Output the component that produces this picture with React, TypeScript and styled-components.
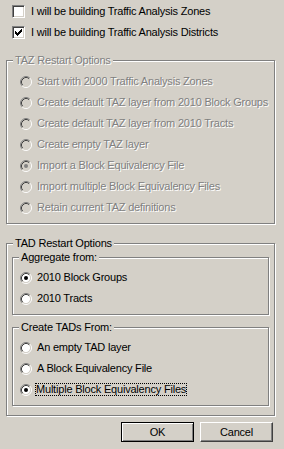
import React from 'react';
import styled, { createGlobalStyle } from 'styled-components';

const Global = createGlobalStyle`
  html, body { margin: 0; padding: 0; background: #d4d0c8; }
  body { font-family: "Liberation Sans", Arial, sans-serif; font-size: 11px; letter-spacing: -0.2px; }
`;

const Dialog = styled.div`
  width: 284px;
  height: 449px;
  box-sizing: border-box;
  background: #d4d0c8;
  padding-top: 1px;
  display: flex;
  flex-direction: column;
  color: #000;
`;

const CheckList = styled.div`
  display: flex;
  flex-direction: column;
  padding-left: 12px;
`;

const Row = styled.div<{ $gap: number }>`
  display: flex;
  align-items: center;
  height: 21px;
  gap: ${(p) => p.$gap}px;
  white-space: nowrap;
`;

const Text = styled.span<{ $disabled?: boolean; $focus?: boolean }>`
  line-height: 13px;
  color: ${(p) => (p.$disabled ? '#808080' : '#000')};
  text-shadow: ${(p) => (p.$disabled ? '1px 1px 0 #fff' : 'none')};
  ${(p) =>
    p.$focus
      ? `outline: 1px dotted #000; outline-offset: -1px; padding: 0 1px; margin-left: -2px;`
      : ''}
`;

const CheckBox = styled.span`
  width: 13px;
  height: 13px;
  box-sizing: border-box;
  border-style: solid;
  border-width: 1px;
  border-color: #808080 #fff #fff #808080;
  box-shadow: inset 1px 1px 0 #404040, inset -1px -1px 0 #d4d0c8;
  background: #fff;
  display: flex;
  align-items: center;
  justify-content: center;
  flex: none;
`;

const Group = styled.div<{ $mt: number; $mx: [number, number]; $pt: number; $pb: number; $pl: number; $pr?: number }>`
  position: relative;
  margin: ${(p) => p.$mt}px ${(p) => p.$mx[1]}px 0 ${(p) => p.$mx[0]}px;
  padding: ${(p) => p.$pt}px ${(p) => p.$pr ?? 0}px ${(p) => p.$pb}px ${(p) => p.$pl}px;
  border: 1px solid #808080;
  box-shadow: inset 1px 1px 0 #fff, 1px 1px 0 #fff;
  display: flex;
  flex-direction: column;
`;

const Legend = styled.span<{ $disabled?: boolean }>`
  position: absolute;
  left: 6px;
  top: -7px;
  padding: 0 2px;
  line-height: 13px;
  background: #d4d0c8;
  white-space: nowrap;
  color: ${(p) => (p.$disabled ? '#808080' : '#000')};
  text-shadow: ${(p) => (p.$disabled ? '1px 1px 0 #fff' : 'none')};
`;

const ButtonBar = styled.div`
  display: flex;
  justify-content: flex-end;
  gap: 6px;
  padding-right: 11px;
  margin-top: 6px;
`;

const Button = styled.button<{ $default?: boolean }>`
  width: 73px;
  height: 20px;
  box-sizing: border-box;
  padding: 0;
  font-family: "Liberation Sans", Arial, sans-serif;
  font-size: 11px;
  letter-spacing: -0.2px;
  color: #000;
  background: #d4d0c8;
  ${(p) =>
    p.$default
      ? `border: 1px solid #000; box-shadow: inset 1px 1px 0 #fff, inset -1px -1px 0 #808080;`
      : `border-style: solid; border-width: 1px; border-color: #fff #404040 #404040 #fff; box-shadow: inset -1px -1px 0 #808080;`}
`;

const CheckMark = () => {
  const px: [number, number][] = [
    [6, 0],
    [5, 1], [6, 1],
    [0, 2], [4, 2], [5, 2], [6, 2],
    [0, 3], [1, 3], [3, 3], [4, 3], [5, 3],
    [0, 4], [1, 4], [2, 4], [3, 4], [4, 4],
    [1, 5], [2, 5], [3, 5],
    [2, 6],
  ];
  return (
    <svg width="7" height="7" viewBox="0 0 7 7" shapeRendering="crispEdges">
      {px.map(([x, y]) => (
        <rect key={`${x}-${y}`} x={x} y={y} width="1" height="1" fill="#000" />
      ))}
    </svg>
  );
};

const Checkbox = ({ checked, label }: { checked?: boolean; label: string }) => (
  <Row $gap={6}>
    <CheckBox>{checked && <CheckMark />}</CheckBox>
    <Text>{label}</Text>
  </Row>
);

const RadioIcon = ({ checked, disabled }: { checked?: boolean; disabled?: boolean }) => (
  <svg width="12" height="12" viewBox="0 0 12 12" style={{ flex: 'none' }}>
    <circle cx="6" cy="6" r="4.2" fill={disabled ? '#d4d0c8' : '#fff'} />
    <path d="M2.11 9.89 A5.5 5.5 0 0 1 9.89 2.11" fill="none" stroke="#808080" strokeWidth="1" />
    <path d="M9.89 2.11 A5.5 5.5 0 0 1 2.11 9.89" fill="none" stroke="#fff" strokeWidth="1" />
    <path d="M2.82 9.18 A4.5 4.5 0 0 1 9.18 2.82" fill="none" stroke="#404040" strokeWidth="1" />
    <path d="M9.18 2.82 A4.5 4.5 0 0 1 2.82 9.18" fill="none" stroke="#d4d0c8" strokeWidth="1" />
    {checked && <circle cx="6" cy="6" r="2" fill={disabled ? '#808080' : '#000'} />}
  </svg>
);

const Radio = ({
  label,
  checked,
  disabled,
  focus,
}: {
  label: string;
  checked?: boolean;
  disabled?: boolean;
  focus?: boolean;
}) => (
  <Row $gap={5}>
    <RadioIcon checked={checked} disabled={disabled} />
    <Text $disabled={disabled} $focus={focus}>
      {label}
    </Text>
  </Row>
);

const tazOptions = [
  'Start with 2000 Traffic Analysis Zones',
  'Create default TAZ layer from 2010 Block Groups',
  'Create default TAZ layer from 2010 Tracts',
  'Create empty TAZ layer',
  'Import a Block Equivalency File',
  'Import multiple Block Equivalency Files',
  'Retain current TAZ definitions',
];

export default function App() {
  return (
    <>
      <Global />
      <Dialog>
        <CheckList>
          <Checkbox label="I will be building Traffic Analysis Zones" />
          <Checkbox checked label="I will be building Traffic Analysis Districts" />
        </CheckList>

        <Group $mt={17} $mx={[6, 9]} $pt={10} $pb={5} $pl={13}>
          <Legend $disabled>TAZ Restart Options</Legend>
          {tazOptions.map((o, i) => (
            <Radio key={o} label={o} disabled checked={i === 4} />
          ))}
        </Group>

        <Group $mt={19} $mx={[6, 9]} $pt={13} $pb={9} $pl={5} $pr={5}>
          <Legend>TAD Restart Options</Legend>
          <Group $mt={0} $mx={[0, 0]} $pt={9} $pb={5} $pl={7}>
            <Legend>Aggregate from:</Legend>
            <Radio label="2010 Block Groups" checked />
            <Radio label="2010 Tracts" />
          </Group>
          <Group $mt={12} $mx={[0, 0]} $pt={9} $pb={5} $pl={7}>
            <Legend>Create TADs From:</Legend>
            <Radio label="An empty TAD layer" />
            <Radio label="A Block Equivalency File" />
            <Radio label="Multiple Block Equivalency Files" checked focus />
          </Group>
        </Group>

        <ButtonBar>
          <Button $default>OK</Button>
          <Button>Cancel</Button>
        </ButtonBar>
      </Dialog>
    </>
  );
}
